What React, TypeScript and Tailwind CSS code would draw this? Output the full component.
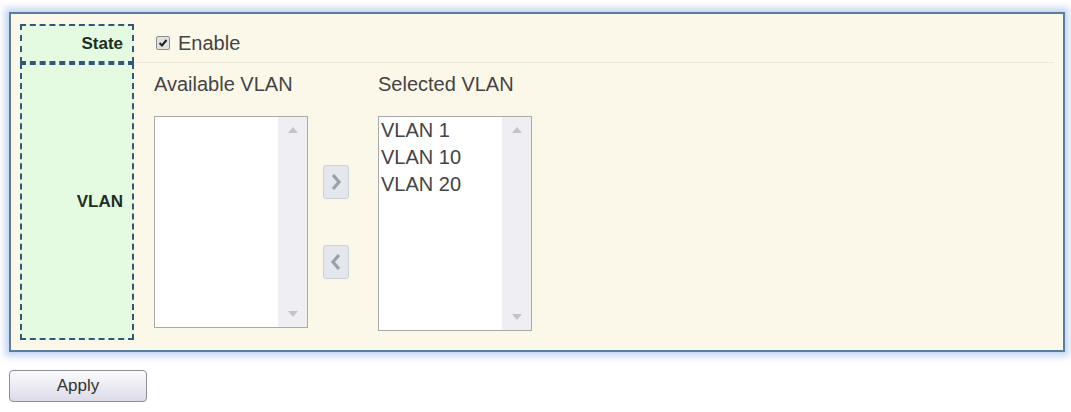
import React from "react";

function ListBox({ items, h }: { items: string[]; h: string }) {
  return (
    <div className={`flex w-[154px] border border-[#a9a9a9] bg-white ${h}`}>
      <div className="flex-1 pl-[2px] pt-[0px] text-[20px] leading-[27px] text-[#444]">
        {items.map((i) => (
          <div key={i}>{i}</div>
        ))}
      </div>
      <div className="flex w-[29px] flex-col items-center justify-between bg-[#efeff3] py-[10px]">
        <svg width="10" height="6" viewBox="0 0 10 6">
          <path d="M0 6 L5 0 L10 6 Z" fill="#c4c4c8" />
        </svg>
        <svg width="10" height="6" viewBox="0 0 10 6">
          <path d="M0 0 L5 6 L10 0 Z" fill="#c4c4c8" />
        </svg>
      </div>
    </div>
  );
}

function ArrowButton({ dir }: { dir: "right" | "left" }) {
  return (
    <div className="flex h-[34px] w-[26px] items-center justify-center rounded-[3px] border border-[#cdd1d8] bg-[#e4e7ee]">
      <svg width="12" height="18" viewBox="0 0 12 18">
        {dir === "right" ? (
          <path d="M3 2 L9 9 L3 16" stroke="#98a0a8" strokeWidth="3.2" fill="none" />
        ) : (
          <path d="M9 2 L3 9 L9 16" stroke="#98a0a8" strokeWidth="3.2" fill="none" />
        )}
      </svg>
    </div>
  );
}

export default function App() {
  return (
    <div className="h-[412px] w-[1071px] bg-white pl-[9px] pt-[12px] font-['Liberation_Sans',Arial,sans-serif]">
      <div className="w-[1056px] border-2 border-[#5a7c9e] bg-[#fcf8e9] px-[9px] pb-[10px] pt-[10px] shadow-[0_0_7px_4px_rgba(130,170,230,0.5)]">
        <div className="flex">
          <div className="flex h-[39px] w-[114px] items-center justify-end border-2 border-dashed border-[#34567a] bg-[#e4fbe2] pr-[9px] text-[17px] font-bold text-[#1e2e22]">
            State
          </div>
          <div className="flex flex-1 items-center border-b border-[#efe9da] pl-[22px]">
            <div className="flex h-[14px] w-[14px] items-center justify-center rounded-[2px] border border-[#8c8c8c] bg-[#e2e2e2]">
              <svg width="10" height="10" viewBox="0 0 10 10">
                <path d="M1.5 5 L4 7.5 L8.5 2" stroke="#222" strokeWidth="2" fill="none" />
              </svg>
            </div>
            <span className="ml-[8px] text-[20px] text-[#444]">Enable</span>
          </div>
        </div>
        <div className="flex">
          <div className="flex h-[277px] w-[114px] items-center justify-end border-2 border-dashed border-[#34567a] bg-[#e4fbe2] pr-[9px] text-[17px] font-bold text-[#1e2e22]">
            VLAN
          </div>
          <div className="flex flex-1 items-start pl-[20px] pt-[9px]">
            <div className="flex flex-col">
              <div className="text-[20px] leading-[24px] text-[#444]">Available VLAN</div>
              <div className="mt-[20px]">
                <ListBox items={[]} h="h-[212px]" />
              </div>
            </div>
            <div className="ml-[15px] mt-[93px] flex flex-col gap-[46px]">
              <ArrowButton dir="right" />
              <ArrowButton dir="left" />
            </div>
            <div className="ml-[29px] flex flex-col">
              <div className="text-[20px] leading-[24px] text-[#444]">Selected VLAN</div>
              <div className="mt-[20px]">
                <ListBox items={["VLAN 1", "VLAN 10", "VLAN 20"]} h="h-[215px]" />
              </div>
            </div>
          </div>
        </div>
      </div>
      <button className="mt-[18px] flex h-[32px] w-[138px] items-center justify-center rounded-[4px] border border-[#8e8e96] bg-gradient-to-b from-[#fbfbfd] to-[#dcdbe8] text-[17px] text-[#333]">
        Apply
      </button>
    </div>
  );
}
